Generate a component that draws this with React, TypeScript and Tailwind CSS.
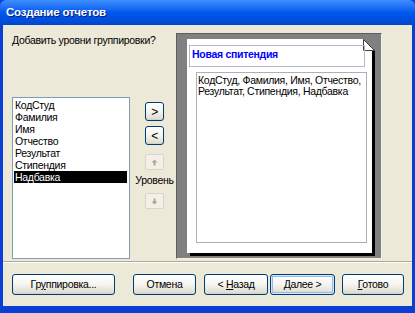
import React from "react";

const fields = ["КодСтуд", "Фамилия", "Имя", "Отчество", "Результат", "Стипендия", "Надбавка"];

const XpButton = ({
  children,
  className = "",
  isDefault = false,
}: {
  children: React.ReactNode;
  className?: string;
  isDefault?: boolean;
}) => (
  <div
    className={`flex items-center justify-center rounded-[3px] border border-[#003c74] bg-gradient-to-b from-white via-[#f5f4ef] to-[#dcd8cc] text-[10.5px] leading-none tracking-[-0.3px] text-black ${
      isDefault ? "shadow-[inset_0_0_0_1px_#cee7ff,inset_0_0_0_2px_#98b8ea]" : "shadow-[inset_0_-1px_0_#d6d0c5]"
    } ${className}`}
  >
    {children}
  </div>
);

const ArrowButton = ({ up, className = "" }: { up: boolean; className?: string }) => (
  <div
    className={`flex h-[16px] w-[19px] items-center justify-center rounded-[2px] border border-[#d8d5c7] bg-[#f2f0e8] ${className}`}
  >
    <svg width="7" height="7" viewBox="0 0 7 7" className={up ? "" : "rotate-180"}>
      <path d="M3.5 0.5 L6.5 3.5 L4.5 3.5 L4.5 6.5 L2.5 6.5 L2.5 3.5 L0.5 3.5 Z" fill="#aca899" />
    </svg>
  </div>
);

const App = () => {
  return (
    <div className="flex h-[313px] w-[415px] flex-col overflow-hidden bg-[#0a3fd6] font-['Liberation_Sans',Arial,sans-serif]">
      {/* title bar */}
      <div className="flex h-[25px] items-center rounded-t-[6px] bg-gradient-to-b from-[#3d8eff] via-[#0058ee] to-[#0047d0] pl-[6px]">
        <span className="text-[11.5px] font-bold tracking-[-0.2px] text-white [text-shadow:1px_1px_0_#0a1e80]">
          Создание отчетов
        </span>
      </div>

      <div className="mx-[3px] mb-[7px] flex flex-1 flex-col bg-[#ece9d8] text-[10.5px] tracking-[-0.3px]">
        <div className="flex h-[234px] pl-[9px] pt-[8px]">
          {/* left column */}
          <div className="flex w-[118px] flex-col">
            <div className="mt-[1px] whitespace-nowrap leading-[13px] text-black">Добавить уровни группировки?</div>
            <div className="mt-auto h-[162px] border border-[#7f9db9] bg-white pt-[1px] pl-[1px] pr-[2px]">
              {fields.map((f, i) => (
                <div
                  key={f}
                  className={`h-[12px] pl-[1px] leading-[12px] ${
                    i === fields.length - 1 ? "bg-black text-white" : "text-black"
                  }`}
                >
                  {f}
                </div>
              ))}
            </div>
          </div>

          {/* middle buttons */}
          <div className="flex w-[46px] flex-col items-center pl-[3px] pt-[69px]">
            <XpButton className="h-[19px] w-[19px] text-[12px]">&gt;</XpButton>
            <XpButton className="mt-[5px] h-[19px] w-[19px] text-[12px]">&lt;</XpButton>
            <ArrowButton up className="mt-[9px]" />
            <div className="mt-[4px] h-[12px] whitespace-nowrap leading-[12px] text-black">Уровень</div>
            <ArrowButton up={false} className="mt-[7px]" />
          </div>

          {/* preview */}
          <div className="h-[226px] w-[206px] border border-l-[#5e5e5e] border-t-[#5e5e5e] border-r-[#f4f3ee] border-b-[#f4f3ee] bg-[#808080] pl-[10px] pt-[5px]">
            <div className="relative h-[214px] w-[185px] bg-white shadow-[3px_3px_0_#000]">
              <svg width="12" height="12" viewBox="0 0 12 12" className="absolute right-[-3px] top-0">
                <path d="M0 0 L15 0 L15 12 L12 12 Z" fill="#808080" />
                <path d="M0.5 0.5 L0.5 11.5 L11.5 11.5 Z" fill="#ffffff" stroke="#404040" strokeWidth="1" />
              </svg>
              <div className="absolute left-[2px] top-[6px] h-[22px] w-[176px] border border-[#b4bccb] pl-[2px] pt-[2px] font-bold leading-[13px] text-[#0000ff]">
                Новая спитендия
              </div>
              <div className="absolute left-[9px] top-[33px] h-[171px] w-[171px] border border-[#b0b0b0] pl-[1px] pt-[2px] leading-[11px] text-black">
                КодСтуд, Фамилия, Имя, Отчество, Результат, Стипендия, Надбавка
              </div>
            </div>
          </div>
        </div>

        {/* separator */}
        <div className="mt-[2px] h-[2px] border-t border-b border-t-[#aca899] border-b-white" />

        {/* buttons */}
        <div className="mt-[11px] flex pl-[9px]">
          <XpButton className="h-[21px] w-[103px]">
            <span>
              Гр<span className="underline">у</span>ппировка...
            </span>
          </XpButton>
          <XpButton className="ml-[18px] h-[21px] w-[63px]">Отмена</XpButton>
          <XpButton className="ml-[8px] h-[21px] w-[64px]">
            <span>
              &lt; <span className="underline">Н</span>азад
            </span>
          </XpButton>
          <XpButton isDefault className="ml-[2px] h-[21px] w-[65px]">
            <span>
              <span className="underline">Д</span>алее &gt;
            </span>
          </XpButton>
          <XpButton className="ml-[7px] h-[21px] w-[62px]">
            <span>
              <span className="underline">Г</span>отово
            </span>
          </XpButton>
        </div>
      </div>
    </div>
  );
};

export default App;
